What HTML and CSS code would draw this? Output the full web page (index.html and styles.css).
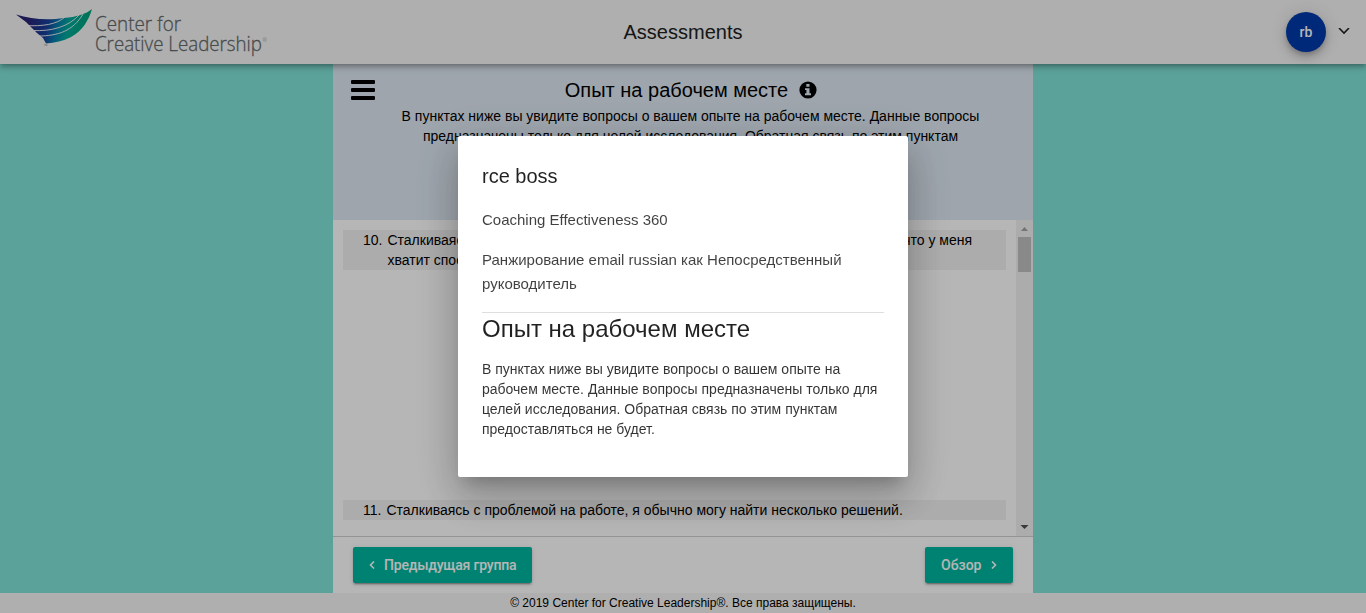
FILE: index.html
```html
<!DOCTYPE html>
<html lang="ru">
<head>
<meta charset="utf-8">
<title>Assessments</title>
<link rel="stylesheet" href="styles.css">
</head>
<body>
<div class="app">
  <header class="topbar">
    <svg class="logo" width="270" height="64" viewBox="0 0 270 64" role="img" aria-label="Center for Creative Leadership">
      <defs>
        <linearGradient id="wing" x1="28" y1="20" x2="84" y2="34" gradientUnits="userSpaceOnUse">
          <stop offset="0" stop-color="#292376"/><stop offset=".35" stop-color="#17409b"/><stop offset=".52" stop-color="#087dac"/><stop offset=".7" stop-color="#00a99c"/><stop offset="1" stop-color="#00a37c"/>
        </linearGradient>
      </defs>
      <path fill="url(#wing)" d="M16 14.500C30 18.500 46 21 64 18C76 17 86 14 92 9C89 20 82 31 71 37C63 41 55 43 46 43.500L43 38L37 33L32 28L26 22Z"/>
      <path class="feather" d="M26 25.500C42 26.500 57 24.500 65 17M33 30.500C51 31.500 69 27 80 14M38 36C58 36 73 31 83 14"/>
      <g class="logo-text">
        <text x="95" y="30.500" textLength="86" lengthAdjust="spacingAndGlyphs">Center for</text>
        <text x="95" y="50.500" textLength="167" lengthAdjust="spacingAndGlyphs">Creative Leadership</text>
        <text class="mark" x="262.500" y="42">®</text>
        <text class="mark" x="44" y="48">™</text>
      </g>
    </svg>
    <h1 class="app-title">Assessments</h1>
    <div class="account">
      <span class="avatar">rb</span>
      <svg width="12" height="8" viewBox="0 0 12 8"><path class="account-arrow" d="M1 0L6 5L11 0"/></svg>
    </div>
  </header>
  <main class="panel">
    <section class="intro">
      <svg class="menu" width="24" height="20" viewBox="0 0 24 20"><path d="M1 0h22q1 0 1 1v2q0 1-1 1H1q-1 0-1-1V1q0-1 1-1zM1 8h22q1 0 1 1v2q0 1-1 1H1q-1 0-1-1V9q0-1 1-1zM1 16h22q1 0 1 1v2q0 1-1 1H1q-1 0-1-1v-2q0-1 1-1z"/></svg>
      <div class="intro-copy">
        <h2 class="intro-title">Опыт на рабочем месте
          <svg width="18" height="18" viewBox="0 0 18 18"><circle cx="9" cy="9" r="8.600"/><path fill="#dee8f2" d="M7.300 3h3.200v2.800H7.300zM6 7.200h4.500v5H12v2H6v-2h1.400V9.100H6z"/></svg>
        </h2>
        <p class="intro-text">В пунктах ниже вы увидите вопросы о вашем опыте на рабочем месте. Данные вопросы<br>предназначены только для целей исследования. Обратная связь по этим пунктам</p>
      </div>
    </section>
    <section class="questions">
      <div class="question-list">
        <div class="question"><span class="number">10.</span><div class="question-text"><div class="split"><span>Сталкиваясь</span><span>что у меня</span></div><div>хватит способ</div></div></div>
        <div class="question"><span class="number">11.</span><span>Сталкиваясь с проблемой на работе, я обычно могу найти несколько решений.</span></div>
      </div>
      <div class="scrollbar">
        <svg width="17" height="17" viewBox="0 0 17 17"><path fill="#a3a3a3" d="M5 11L8.500 7L12 11Z"/></svg>
        <div class="thumb"></div>
        <svg width="17" height="17" viewBox="0 0 17 17"><path fill="#505050" d="M4.500 6L8.500 10L12.500 6Z"/></svg>
      </div>
    </section>
    <nav class="actions">
      <button class="btn prev"><svg width="6" height="8" viewBox="0 0 6 8"><path class="chevron" d="M5 .5L1.500 4L5 7.500"/></svg><span>Предыдущая группа</span></button>
      <button class="btn next"><span>Обзор</span><svg width="6" height="8" viewBox="0 0 6 8"><path class="chevron" d="M1 .5L4.500 4L1 7.500"/></svg></button>
    </nav>
  </main>
  <footer class="footer">© 2019 Center for Creative Leadership®. Все права защищены.</footer>
</div>
<div class="overlay">
  <div class="dialog" role="dialog">
    <h2 class="dialog-title">rce boss</h2>
    <p class="dialog-line">Coaching Effectiveness 360</p>
    <p class="dialog-line">Ранжирование email russian как Непосредственный<br>руководитель</p>
    <hr class="divider">
    <h3 class="section-title">Опыт на рабочем месте</h3>
    <p class="dialog-text">В пунктах ниже вы увидите вопросы о вашем опыте на<br>рабочем месте. Данные вопросы предназначены только для<br>целей исследования. Обратная связь по этим пунктам<br>предоставляться не будет.</p>
  </div>
</div>
</body>
</html>
```
FILE: styles.css
```css
* { box-sizing: border-box; }
body { margin: 0; overflow: hidden; font-family: "Liberation Sans", Arial, sans-serif; font-size: 14px; line-height: 20px; color: #000; }
h1, h2, h3, p { margin: 0; font-weight: 400; }
svg { display: block; flex: none; }

.app { height: 613px; display: flex; flex-direction: column; background: #80e3d8; }
.topbar { position: relative; z-index: 1; height: 64px; flex: none; display: grid; grid-template-columns: 1fr auto 1fr; align-items: center; background: #f5f5f5; box-shadow: 0 2px 4px -1px rgba(0,0,0,.2), 0 4px 5px rgba(0,0,0,.14), 0 1px 10px rgba(0,0,0,.12); }
.feather { fill: none; stroke: #f5f5f5; stroke-width: .9; }
.logo-text { font: 300 21px "Open Sans", sans-serif; fill: #63696b; stroke: #63696b; stroke-width: .3; }
.mark { font-size: 5px; stroke: none; }
.app-title { font-size: 20px; color: #212121; }
.account { display: flex; align-items: center; justify-content: flex-end; gap: 12px; padding-right: 16px; }
.avatar { width: 40px; height: 40px; border-radius: 50%; background: #003aab; color: #fff; font-family: Roboto, sans-serif; font-weight: 500; line-height: 40px; text-align: center; box-shadow: 0 3px 5px -1px rgba(0,0,0,.2), 0 6px 10px rgba(0,0,0,.14), 0 1px 18px rgba(0,0,0,.12); }
.account-arrow { fill: none; stroke: #222; stroke-width: 1.6; }

.panel { width: 700px; height: 529px; margin: 0 auto; display: flex; flex-direction: column; background: #fff; }
.intro { height: 156px; flex: none; display: grid; grid-template-columns: 24px 1fr 24px; padding: 16px 18px 0; background: #dee8f2; }
.intro-copy { text-align: center; }
.intro-title { display: flex; justify-content: center; align-items: center; gap: 11px; margin-bottom: 6px; padding-left: 16px; font-size: 20px; line-height: 20px; }
.intro-text { padding-left: 15px; }
.questions { height: 317px; flex: none; display: flex; border-bottom: 1px solid #d0d0d0; }
.question-list { flex: 1; display: flex; flex-direction: column; justify-content: space-between; padding: 10px 10px 16px; }
.question { display: flex; gap: 5px; padding-left: 20px; background: #f2f2f2; white-space: nowrap; }
.number { flex: none; }
.question-text { flex: 1; padding-right: 34px; }
.split { display: flex; justify-content: space-between; }
.scrollbar { width: 17px; display: flex; flex-direction: column; background: #f1f1f1; }
.thumb { width: 13px; height: 35px; margin: 0 2px auto; background: #c1c1c1; }
.actions { display: flex; justify-content: space-between; padding: 10px 20px; }
.btn { display: flex; align-items: center; height: 36px; padding: 0 16px; gap: 9px; border: 0; border-radius: 2px; background: #00b7a0; color: #fff; font: 500 14px/36px Roboto, sans-serif; white-space: nowrap; box-shadow: 0 3px 1px -2px rgba(0,0,0,.2), 0 2px 2px rgba(0,0,0,.14), 0 1px 5px rgba(0,0,0,.12); }
.prev { width: 179px; letter-spacing: -.2px; }
.next { width: 88px; }
.chevron { fill: none; stroke: #fff; stroke-width: 1.6; }
.footer { height: 20px; background: #f5f5f5; text-align: center; font-size: 12px; }

.overlay { position: fixed; inset: 0; z-index: 2; display: flex; align-items: center; justify-content: center; background: rgba(0,0,0,.288); }
.dialog { width: 450px; height: 341px; padding: 24px; border-radius: 2px; background: #fff; color: rgba(0,0,0,.87); box-shadow: 0 11px 15px -7px rgba(0,0,0,.2), 0 24px 38px 3px rgba(0,0,0,.14), 0 9px 46px 8px rgba(0,0,0,.12); }
.dialog-title { margin-bottom: 16px; font-size: 20px; line-height: 32px; }
.dialog-line { margin-bottom: 16px; font-size: 15px; line-height: 24px; color: rgba(0,0,0,.75); }
.divider { height: 1px; margin: 0; border: 0; background: #dedede; }
.section-title { margin-bottom: 14px; font-size: 24px; line-height: 32px; }
.dialog-text { color: rgba(0,0,0,.8); }
```
